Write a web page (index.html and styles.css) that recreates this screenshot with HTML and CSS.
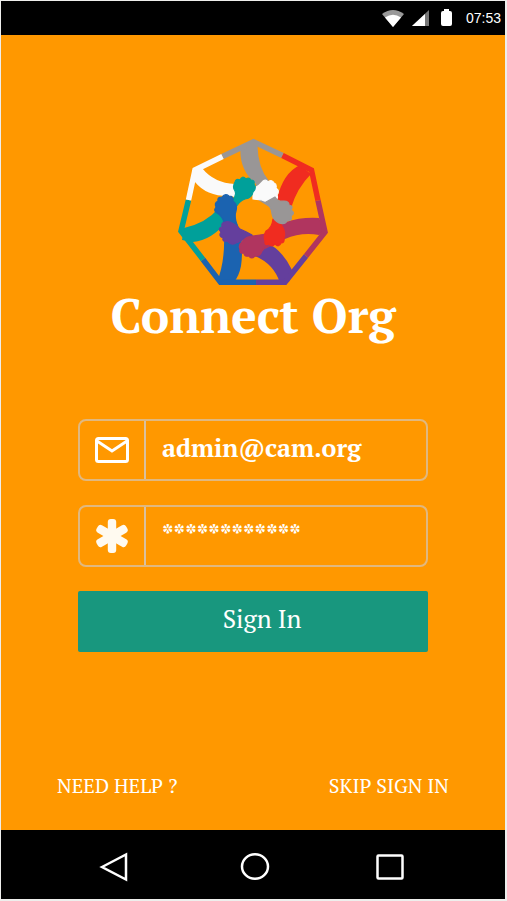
FILE: index.html
```html
<!DOCTYPE html>
<html lang="en">
<head>
<meta charset="utf-8">
<meta name="viewport" content="width=device-width, initial-scale=1">
<title>Connect Org</title>
<link rel="stylesheet" href="styles.css">
</head>
<body>
<div class="phone">
  <header class="status">
    <svg width="22" height="17" viewBox="0 0 22 17" aria-hidden="true"><path d="M0 4Q11-4 22 4L11 17Z" fill="#999"/><path d="M3 7.500Q11 2 19 7.500L11 17Z" fill="#fff"/></svg>
    <svg width="17" height="16" viewBox="0 0 17 16" aria-hidden="true"><path d="M17 0V16H0Z" fill="#777"/><path d="M13 4V16H0Z" fill="#fff"/></svg>
    <svg class="battery" width="11" height="18" viewBox="0 0 11 18" aria-hidden="true"><path d="M3 0H8V2H9Q11 2 11 4V15Q11 17 9 17H2Q0 17 0 15V4Q0 2 2 2H3Z" fill="#fff"/></svg>
    <time class="clock">07:53</time>
  </header>

  <main class="screen">
    <svg class="logo" width="164" height="160" viewBox="171 130 164 160" aria-hidden="true">
      <!-- arms -->
      <path fill="#999696" d="M240.500 147L252 141L257.500 146Q258 168 269 181L276 198L271 208L255 198L256 184Q239 170 240.500 147Z"/>
      <path fill="#fafafa" d="M202 168Q214 183 235 184L241 199L231 196Q207 197 195 182L192 170Z"/>
      <path fill="#00a09a" d="M184 228Q206 223 218 209L226 222Q212 240 193 242L182 240Z"/>
      <path fill="#1b63b0" d="M223 221L235 219L241 232Q243 254 241 266Q239 276 234 282H217Q227 257 223 221Z"/>
      <path fill="#643f9d" d="M242 232L252 235L265 242Q282 249 292 270L289 282L280 283Q274 264 255 256L242 240Z"/>
      <path fill="#b0355f" d="M263 235Q286 216 319 218L325 231L319 235Q301 232 285 239L265 249Z"/>
      <path fill="#f02c20" d="M300 165L311 174Q297 188 291 208L277 199Q283 173 300 165Z"/>
      <!-- frame -->
      <g fill="none" stroke-width="5.500" stroke-linejoin="miter">
        <path stroke="#999696" d="M222.500 156.500L253.500 141.800L282.500 155.500"/>
        <path stroke="#f02c20" d="M282.500 155.500L311.500 170L318 200.500"/>
        <path stroke="#b0355f" d="M318 200.500L325 232L306 256"/>
        <path stroke="#643f9d" d="M306 256L285 282.300H256"/>
        <path stroke="#1b63b0" d="M256 282.300H220.500L203 259.500"/>
        <path stroke="#00a09a" d="M203 259.500L181 231L188.500 200"/>
        <path stroke="#fafafa" d="M188.500 200L195 170L222.500 156.500"/>
      </g>
      <!-- hands -->
      <g stroke-width="1.200" stroke-linejoin="round">
        <path fill="#fafafa" stroke="#fafafa" d="M253 189Q259 186 263 181Q266 179 268 182Q272 179 274 183Q277 184 276 188Q280 191 277 195Q279 200 273 199Q267 203 262 200L253 199Z"/>
        <path fill="#00a09a" stroke="#00a09a" d="M232 200Q237 196 235 191Q232 187 235 182Q236 178 240 180Q242 175 246 179Q249 177 251 180Q255 180 254 184Q257 188 253 192Q252 198 245 199Q239 201 235 209Z"/>
        <path fill="#1b63b0" stroke="#1b63b0" d="M224 222Q222 216 217 213Q213 211 216 207Q214 203 218 201Q217 197 222 197Q225 193 229 196Q234 196 233 201Q238 205 236 211Q234 216 237 225Z"/>
        <path fill="#643f9d" stroke="#643f9d" d="M252 235Q245 231 240 229Q231 220 225 222Q221 222 222 227Q217 228 221 232Q218 236 223 238Q222 242 227 241Q231 246 236 243Q242 241 244 238Z"/>
        <path fill="#b0355f" stroke="#b0355f" d="M266 234Q259 235 253 236Q246 236 242 242Q238 245 240 249Q239 254 244 253Q244 257 249 256Q251 260 255 256Q260 257 262 251L268 244Z"/>
        <path fill="#f02c20" stroke="#f02c20" d="M273 219Q272 228 266 231Q263 236 265 241Q264 246 269 244Q271 248 275 244Q279 248 281 243Q285 243 284 238Q286 232 282 226L278 218Z"/>
        <path fill="#999696" stroke="#999696" d="M266 202L275 197Q278 202 284 201Q289 201 289 205Q294 206 291 210Q296 213 291 216Q293 221 287 221Q285 225 279 223Q273 220 272 214Q272 208 266 202Z"/>
      </g>
    </svg>
    <h1 class="title">Connect Org</h1>

    <form class="form">
      <div class="field">
        <label class="field-icon" for="email" aria-label="Email">
          <svg width="34" height="26" viewBox="0 0 34 26" aria-hidden="true"><rect x="1.500" y="1.500" width="31" height="23" rx="2" fill="none" stroke="#fff" stroke-width="3"/><path d="M2 4L17 14L32 4" fill="none" stroke="#fff" stroke-width="3"/></svg>
        </label>
        <input id="email" class="field-input" type="text" value="admin@cam.org">
      </div>
      <div class="field">
        <label class="field-icon" for="password" aria-label="Password">
          <svg width="34" height="34" viewBox="0 0 34 34" aria-hidden="true">
            <g fill="#fffaf0">
              <rect x="12.800" y="0" width="8.400" height="34" rx="3"/>
              <rect x="12.800" y="0" width="8.400" height="34" rx="3" transform="rotate(60 17 17)"/>
              <rect x="12.800" y="0" width="8.400" height="34" rx="3" transform="rotate(120 17 17)"/>
            </g>
          </svg>
        </label>
        <input id="password" class="field-input" type="text" value="************" autocomplete="off">
      </div>
      <button class="submit" type="button">Sign In</button>
    </form>

    <div class="links">
      <a href="#help">NEED HELP ?</a>
      <a href="#skip">SKIP SIGN IN</a>
    </div>
  </main>

  <nav class="navbar" aria-label="System">
    <button type="button" aria-label="Back"><svg width="30" height="30" viewBox="0 0 30 30"><path d="M3 15L27 2.500V27.500Z" fill="none" stroke="#fff" stroke-width="2.500"/></svg></button>
    <button class="home" type="button" aria-label="Home"><svg width="30" height="30" viewBox="0 0 30 30"><ellipse cx="15" cy="14.500" rx="13" ry="12.300" fill="none" stroke="#fff" stroke-width="2.500"/></svg></button>
    <button type="button" aria-label="Recent apps"><svg width="30" height="30" viewBox="0 0 30 30"><rect x="2.500" y="3.500" width="25" height="23" rx="1" fill="none" stroke="#fff" stroke-width="2.500"/></svg></button>
  </nav>
</div>
</body>
</html>
```
FILE: styles.css
```css
* {
  box-sizing: border-box;
}

body {
  margin: 0;
  background: #eeeeec;
  font-family: "PT Serif", "Liberation Serif", serif;
  color: #fff;
}

.phone {
  display: flex;
  flex-direction: column;
  min-height: 100vh;
  padding: 1px 2px 2px 1px;
}

.status {
  display: flex;
  align-items: center;
  justify-content: flex-end;
  gap: 8px;
  height: 34px;
  padding-right: 4px;
  background: #000;
}

.battery {
  margin-left: 4px;
}

.clock {
  margin-left: 6px;
  font: 14px "Liberation Sans", Arial, sans-serif;
}

.screen {
  flex: 1;
  display: flex;
  flex-direction: column;
  align-items: center;
  padding: 95px 56px 32px;
  background: #ff9800;
}

.logo {
  display: block;
}

.title {
  margin: 0;
  font-size: 48px;
  line-height: 50px;
  font-weight: bold;
  white-space: nowrap;
}

.form {
  display: flex;
  flex-direction: column;
  gap: 24px;
  width: 350px;
  max-width: 100%;
  margin-top: 79px;
}

.field {
  display: flex;
  height: 62px;
  border: 2px solid #e0b880;
  border-radius: 8px;
}

.field-icon {
  display: flex;
  align-items: center;
  justify-content: center;
  width: 66px;
  border-right: 2px solid #d9c0a0;
}

.field-input {
  flex: 1;
  min-width: 0;
  padding: 0 16px 6px;
  border: 0;
  background: transparent;
  color: #fff;
  font-family: inherit;
  font-size: 25px;
  font-weight: bold;
  outline: none;
}

.submit {
  height: 61px;
  padding: 0 0 6px 18px;
  border: 0;
  border-radius: 2px;
  background: #18977e;
  color: #fff;
  font-family: inherit;
  font-size: 25px;
}

.links {
  display: flex;
  justify-content: space-between;
  width: 100%;
  margin-top: auto;
  font-size: 20px;
  line-height: 24px;
}

.links a {
  color: #fff;
  text-decoration: none;
}

.navbar {
  display: flex;
  align-items: center;
  justify-content: space-between;
  height: 69px;
  padding: 4px 100px 0 98px;
  background: #000;
}

.navbar button {
  padding: 0;
  border: 0;
  background: none;
}

.navbar .home {
  padding-left: 5px;
}

.navbar svg {
  display: block;
}
```
